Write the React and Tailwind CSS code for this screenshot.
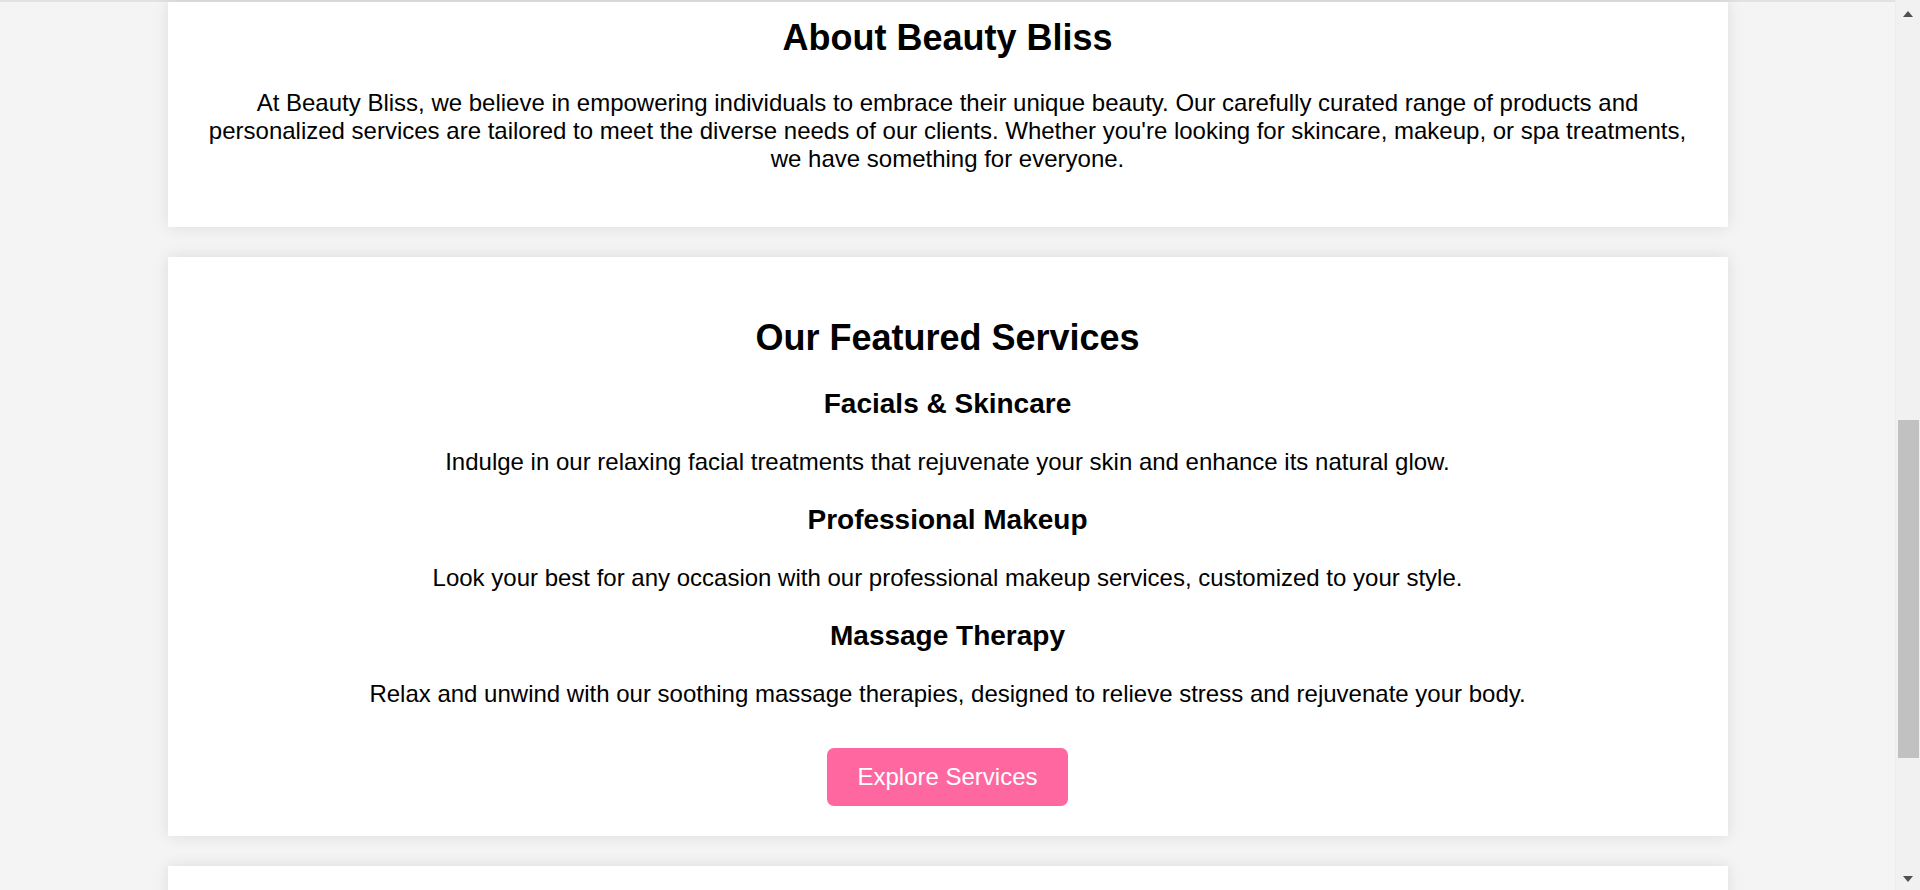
const SERVICES = [
  { title: "Facials & Skincare", text: "Indulge in our relaxing facial treatments that rejuvenate your skin and enhance its natural glow." },
  { title: "Professional Makeup", text: "Look your best for any occasion with our professional makeup services, customized to your style." },
  { title: "Massage Therapy", text: "Relax and unwind with our soothing massage therapies, designed to relieve stress and rejuvenate your body." },
];

const card = "w-[1560px] mx-auto bg-white shadow-[0_0_15px_rgba(0,0,0,0.1)] px-[30px] text-center";

function Scrollbar() {
  return (
    <div className="w-[25px] h-[890px] bg-[#f1f1f1] flex flex-col items-center border-l border-[#ececec]">
      <div className="h-[11px]" />
      <svg width="10" height="6" viewBox="0 0 10 6"><path d="M5 0 L10 6 L0 6 Z" fill="#505050" /></svg>
      <div className="h-[403px]" />
      <div className="w-[21px] h-[338px] bg-[#c1c1c1] ml-[2px] mr-auto" />
      <div className="flex-1" />
      <svg width="10" height="6" viewBox="0 0 10 6"><path d="M0 0 L10 0 L5 6 Z" fill="#505050" /></svg>
      <div className="h-[8px]" />
    </div>
  );
}

export default function App() {
  return (
    <div className="w-[1920px] h-[890px] overflow-hidden flex bg-[#f4f4f4] text-black" style={{ fontFamily: "'Liberation Sans', Arial, sans-serif" }}>
      <div className="w-[1895px] flex flex-col">
        <div className="h-[2px] bg-[#e2e2e2] shrink-0" />

        {/* About */}
        <section className={`${card} pt-[15px] pb-[30px] shrink-0`}>
          <h2 className="text-[36px] font-bold leading-[41px] mb-[31px]">About Beauty Bliss</h2>
          <p className="text-[24px] leading-[28px] mb-[24px]">
            At Beauty Bliss, we believe in empowering individuals to embrace their unique beauty. Our carefully curated range of products and personalized services are tailored to meet the diverse needs of our clients. Whether you're looking for skincare, makeup, or spa treatments, we have something for everyone.
          </p>
        </section>

        {/* Featured services */}
        <section className={`${card} mt-[30px] pt-[60px] pb-[30px] shrink-0`}>
          <h2 className="text-[36px] font-bold leading-[41px] mb-[30px]">Our Featured Services</h2>
          {SERVICES.map((s, i) => (
            <div key={s.title}>
              <h3 className={`text-[28px] font-bold leading-[32px] ${i === 0 ? "" : "mt-[28px]"} mb-[28px]`}>{s.title}</h3>
              <p className="text-[24px] leading-[28px]">{s.text}</p>
            </div>
          ))}
          <button className="mt-[40px] bg-[#ff67a0] text-white text-[24px] leading-[27.6px] px-[30px] py-[15px] rounded-[7px]">
            Explore Services
          </button>
        </section>

        <section className={`${card} mt-[30px] h-[60px] shrink-0`} />
      </div>
      <Scrollbar />
    </div>
  );
}
